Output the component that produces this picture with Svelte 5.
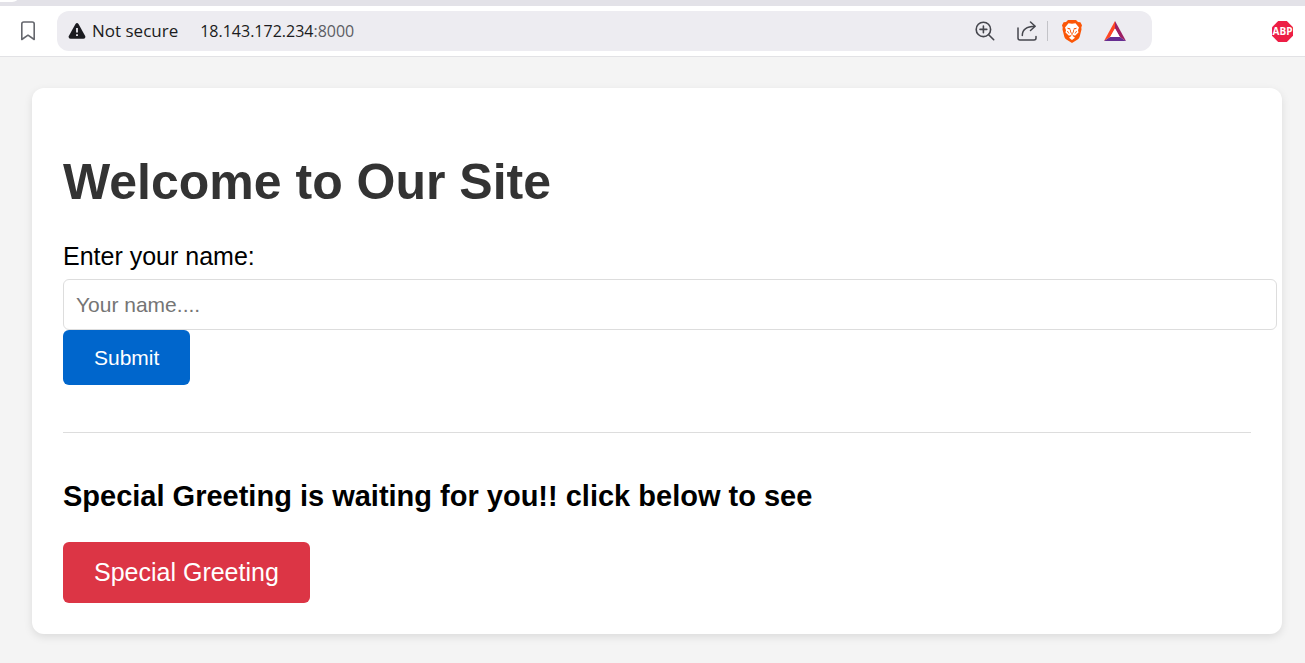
<script>
  let name = $state('');
</script>

<div class="tabs"><div class="tab"></div></div>
<header class="toolbar">
  <button class="icon bookmark" aria-label="Bookmark this page">
    <svg width="16" height="20" viewBox="0 0 16 20" fill="none" stroke="#65676d" stroke-width="1.6" stroke-linejoin="round">
      <path d="M1.8 3Q1.8 1 3.8 1H12.2Q14.2 1 14.2 3V18.5L8 14.2L1.8 18.5Z" />
    </svg>
  </button>
  <div class="address">
    <button class="security">
      <svg width="18" height="16" viewBox="0 0 18 16">
        <path d="M7.5 1Q9 -1 10.5 1L17.2 13Q18 15.5 15.5 15.8H2.5Q0 15.5.8 13Z" fill="#1b1b20" />
        <path d="M9 5V9.5M9 11.3V13" stroke="#edecf1" stroke-width="1.8" />
      </svg>
      Not secure
    </button>
    <a class="url" href="#top">18.143.172.234<span>:8000</span></a>
    <div class="actions">
      <button class="icon" aria-label="Zoom">
        <svg width="20" height="20" viewBox="0 0 20 20" fill="none" stroke="#45464d" stroke-width="1.6" stroke-linecap="round">
          <circle cx="8.4" cy="8.4" r="7.2" /><path d="M13.7 13.7L18.7 18.7M5 8.4H11.8M8.4 5V11.8" />
        </svg>
      </button>
      <button class="icon share" aria-label="Share">
        <svg width="20" height="20" viewBox="0 0 20 20" fill="none" stroke="#45464d" stroke-width="1.5" stroke-linecap="round" stroke-linejoin="round">
          <path d="M1 7V17Q1 19 3 19H17Q19 19 19 17V15.5M5.3 14.5C5.3 8.5 9 5.5 18 5.3M13.5 1L18.2 5.3L13.5 9.5" />
        </svg>
      </button>
      <i class="divider"></i>
      <button class="icon shields" aria-label="Shields">
        <svg width="20" height="23" viewBox="0 0 20 23">
          <path d="M6 0H14L16 2L18.4 2.2L20 5.2L19.3 7.5L19.5 9.5L17.6 17Q17 18.6 15.6 19.6L10 23L4.4 19.6Q3 18.6 2.4 17L.5 9.5L.7 7.5L0 5.2L1.6 2.2L4 2Z" fill="#fb5607" />
          <path d="M6.5 3.2L10 3.8L13.5 3.2L17 7.5L16 10.3L16.5 12.5L13 15.8L11.5 15L10.7 16L13 17.7L10 20L7 17.7L9.3 16L8.5 15L7 15.8L3.5 12.5L4 10.3L3 7.5Z" fill="#fff" />
          <path d="M5 7.7L8.3 8.2L8 9.6L6 9ZM15 7.7L11.7 8.2L12 9.6L14 9Z" fill="#fb5607" />
          <path d="M8.3 9.5L8.7 12.5L10 13.4L11.3 12.5L11.7 9.5M10 13.4V15.5M5.3 11L7 13.5M14.7 11L13 13.5" fill="none" stroke="#fb5607" stroke-width=".9" />
        </svg>
      </button>
      <button class="icon rewards" aria-label="Rewards">
        <svg width="22" height="20" viewBox="0 0 22 20">
          <path d="M11 0L0 20L6.2 16L11 7.5Z" fill="#ff4724" />
          <path d="M11 0L22 20L15.8 16L11 7.5Z" fill="#9e1f63" />
          <path d="M0 20H22L15.8 16H6.2Z" fill="#662d91" />
          <path d="M11 7.5L6.2 16H15.8Z" fill="#fff" />
        </svg>
      </button>
    </div>
  </div>
  <button class="icon" aria-label="Ad blocker">
    <svg width="21" height="21" viewBox="0 0 21 21">
      <path d="M6.2 0H14.8L21 6.2V14.8L14.8 21H6.2L0 14.8V6.2Z" fill="#ed1e45" />
      <text x="10.5" y="14.2" text-anchor="middle" fill="#fff" font-family="Open Sans, sans-serif" font-size="10" font-weight="700">ABP</text>
    </svg>
  </button>
</header>

<main id="top">
  <h1>Welcome to Our Site</h1>
  <form onsubmit={(e) => e.preventDefault()}>
    <label for="name">Enter your name:</label>
    <input id="name" type="text" placeholder="Your name...." bind:value={name} />
    <button class="submit">Submit</button>
  </form>
  <section>
    <h3>Special Greeting is waiting for you!! click below to see</h3>
    <a class="greeting" href="#greeting">Special Greeting</a>
  </section>
</main>

<style>
  :global(body) {
    margin: 0;
    background: #f4f4f4;
    font-family: "Liberation Sans", Arial, sans-serif;
    font-size: 25px;
  }
  button {
    border: 0;
    font-family: inherit;
    cursor: pointer;
  }
  a { text-decoration: none; }
  .tabs {
    height: 6px;
    background: #e3e2e8;
  }
  .tab {
    width: 17px;
    height: 2px;
    background: #fff;
    border-bottom-right-radius: 8px 2px;
  }
  .toolbar {
    display: flex;
    align-items: center;
    height: 50px;
    padding: 0 12px 0 20px;
    background: #fff;
    border-bottom: 1px solid #e2e2e5;
    font-family: "Open Sans", sans-serif;
    font-size: 16px;
  }
  .icon {
    display: flex;
    padding: 0;
    background: none;
  }
  .address {
    display: flex;
    flex: 1;
    align-items: center;
    height: 40px;
    margin: 0 120px 0 21px;
    padding: 0 26px 0 11px;
    box-sizing: border-box;
    border-radius: 12px;
    background: #edecf1;
  }
  .security {
    display: flex;
    align-items: center;
    gap: 6px;
    padding: 0;
    background: none;
    color: #1b1b20;
    font-size: 17px;
    line-height: 24px;
  }
  .url {
    margin-left: 22px;
    color: #1b1b20;
    line-height: 24px;
  }
  .url span { color: #5c5d64; }
  .actions {
    display: flex;
    align-items: center;
    margin-left: auto;
  }
  .share { margin: 0 10px 0 22px; }
  .divider {
    width: 1px;
    height: 20px;
    background: #c3c3c8;
  }
  .shields { margin: 0 22px 0 14px; }
  main {
    margin: 31px 23px 29px 32px;
    padding: 31px;
    border-radius: 12px;
    background: #fff;
    box-shadow: 0 3px 8px rgba(0, 0, 0, 0.1);
  }
  h1 {
    margin: 0 0 31px;
    padding-top: 35px;
    color: #333;
    font-size: 50px;
    line-height: 57px;
  }
  label {
    display: block;
    margin-bottom: 8px;
    line-height: 29px;
  }
  input {
    display: block;
    width: 100%;
    height: 25px;
    padding: 12px;
    border: 1px solid #ddd;
    border-radius: 6px;
    font: 21px "Liberation Sans", Arial, sans-serif;
  }
  input::placeholder { color: #757575; }
  .submit {
    display: block;
    padding: 16px 31px;
    border-radius: 6px;
    background: #0066cc;
    color: #fff;
    font-size: 21px;
    line-height: 23px;
  }
  section {
    margin-top: 47px;
    padding-top: 47px;
    border-top: 1px solid #ddd;
  }
  h3 {
    margin: 0 0 29px;
    font-size: 29px;
    line-height: 33px;
  }
  .greeting {
    display: block;
    width: fit-content;
    padding: 16px 31px;
    border-radius: 6px;
    background: #dc3545;
    color: #fff;
    line-height: 29px;
  }
</style>
